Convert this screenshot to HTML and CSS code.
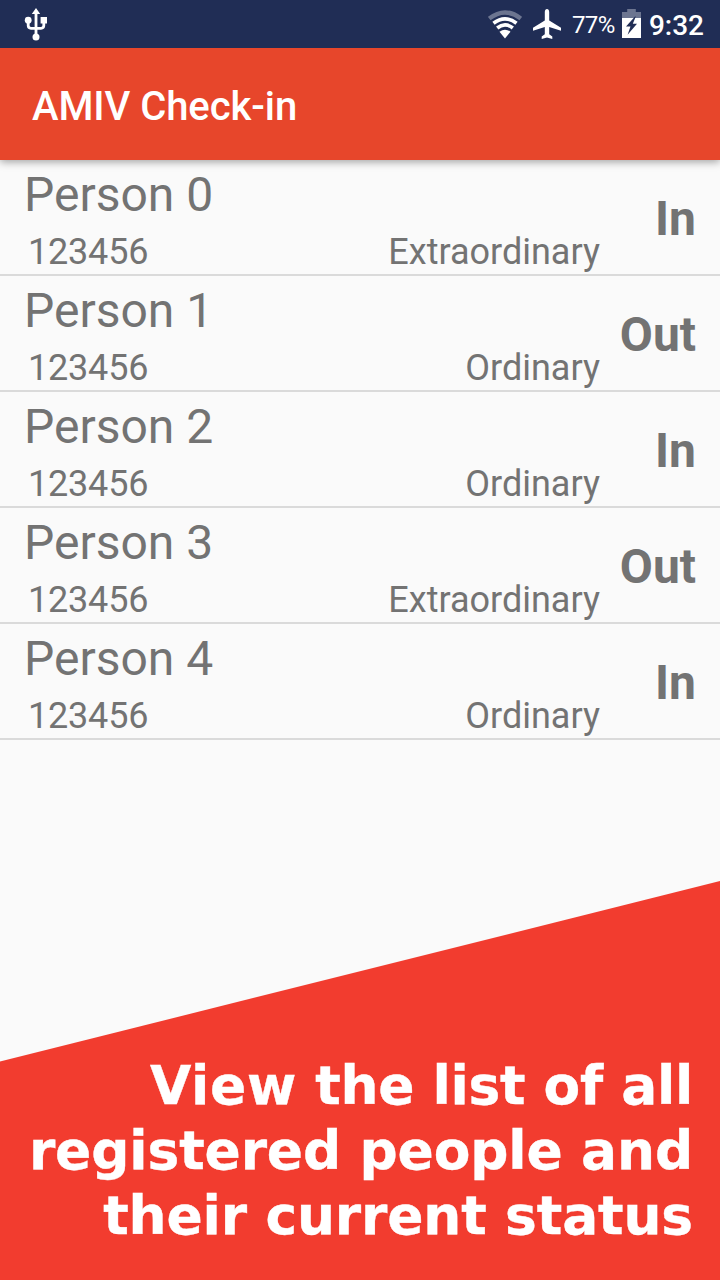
FILE: index.html
```html
<!DOCTYPE html>
<html lang="en">
<head>
<meta charset="utf-8">
<title>AMIV Check-in</title>
<link rel="stylesheet" href="styles.css">
</head>
<body>
<div class="screen">
  <header class="status-bar">
    <svg class="icon-usb" width="24" height="34" viewBox="0 0 24 34">
      <g fill="none" stroke="#fff" stroke-width="2.8"><path d="M12 5V29"/><path d="M4.2 13V17.6Q4.2 20.3 7 20.3H17Q19.8 20.3 19.8 17.6V12"/></g>
      <path fill="#fff" d="M12 0L16.2 6H7.8ZM16.6 9H23V15.4H16.6Z"/>
      <circle cx="4.2" cy="12.2" r="3.4" fill="#fff"/><circle cx="12" cy="29" r="3.5" fill="#fff"/>
    </svg>
    <div class="status-icons">
      <svg class="icon-wifi" width="34" height="29" viewBox="0 0 34 29">
        <g fill="none" stroke="#fff" stroke-width="3.7">
          <path stroke="#6c7590" stroke-width="4.4" d="M1.2 8.6Q17-3.8 32.8 8.6"/>
          <path d="M5.5 13.2Q17 4.4 28.5 13.2"/>
          <path d="M9.2 18Q17 11.8 24.8 18"/>
        </g>
        <path fill="#fff" d="M11.5 21.7Q17 17.8 22.5 21.7L17 28.5Z"/>
      </svg>
      <svg class="icon-plane" width="28" height="30" viewBox="0 0 28 30">
        <path fill="#fff" d="M28 21.7V18.8L16.2 11.4V2.9C16.2 1.2 15.2 0 14 0S11.8 1.2 11.8 2.9V11.4L0 18.8V21.7L11.8 18V25.3L8.7 27.6V30L14 28.5L19.3 30V27.6L16.2 25.3V18Z"/>
      </svg>
      <span class="battery-level">77%</span>
      <svg class="icon-battery" width="19" height="29" viewBox="0 0 19 29">
        <path fill="#6c7590" d="M5.2 0H13.8V3H19V9H0V3H5.2Z"/>
        <path fill="#fff" d="M0 9H19V29H0Z"/>
        <path fill="#202d55" d="M13 7.5L4 17.5H8.5L5.6 25.8L15 14.8H10.8L13.8 7.5Z"/>
      </svg>
      <span class="clock">9:32</span>
    </div>
  </header>
  <div class="app-bar"><h1 class="title">AMIV Check-in</h1></div>
  <main class="list">
    <div class="row"><div class="details"><div class="name">Person 0</div><div class="meta"><span class="number">123456</span><span>Extraordinary</span></div></div><div class="state">In</div></div>
    <div class="row"><div class="details"><div class="name">Person 1</div><div class="meta"><span class="number">123456</span><span>Ordinary</span></div></div><div class="state">Out</div></div>
    <div class="row"><div class="details"><div class="name">Person 2</div><div class="meta"><span class="number">123456</span><span>Ordinary</span></div></div><div class="state">In</div></div>
    <div class="row"><div class="details"><div class="name">Person 3</div><div class="meta"><span class="number">123456</span><span>Extraordinary</span></div></div><div class="state">Out</div></div>
    <div class="row"><div class="details"><div class="name">Person 4</div><div class="meta"><span class="number">123456</span><span>Ordinary</span></div></div><div class="state">In</div></div>
  </main>
  <section class="banner">
    <p class="caption"><span class="line line-tight"><span class="lead">View</span> the list of all</span><span class="line">registered people and</span><span class="line">their current status</span></p>
  </section>
</div>
</body>
</html>
```
FILE: styles.css
```css
* { box-sizing: border-box; }
body { margin: 0; }
.screen {
  width: 720px;
  height: 1280px;
  overflow: hidden;
  display: flex;
  flex-direction: column;
  background: #fafafa;
  font-family: Roboto, sans-serif;
  color: #737373;
}
.status-bar {
  position: relative;
  z-index: 1;
  height: 48px;
  flex: none;
  display: flex;
  justify-content: space-between;
  padding: 0 16px 0 24px;
  background: #202d55;
  color: #fff;
}
.icon-usb { margin-top: 8px; }
.status-icons { display: flex; align-items: flex-start; }
.icon-wifi { margin: 10px 11px 0 0; }
.icon-plane { margin: 9px 11px 0 0; }
.battery-level { width: 43px; font-size: 24px; line-height: 50px; margin-right: 7px; letter-spacing: -0.5px; white-space: nowrap; }
.icon-battery { margin: 9px 8px 0 0; }
.clock { font-size: 28px; line-height: 51px; font-weight: 500; }
.app-bar {
  height: 112px;
  flex: none;
  display: flex;
  align-items: center;
  padding: 6px 32px 0;
  background: #e7462b;
  box-shadow: 0 2px 8px rgba(0, 0, 0, 0.36);
}
.title { margin: 0; font-size: 40px; line-height: 48px; font-weight: 500; letter-spacing: -0.08px; color: #fff; }
.list { flex: 1; }
.row {
  height: 116px;
  display: flex;
  justify-content: space-between;
  align-items: center;
  padding-right: 24px;
  border-bottom: 2px solid #dadada;
}
.details { width: 600px; height: 114px; padding: 7px 0 0 24px; }
.name { font-size: 48px; line-height: 56px; }
.meta {
  display: flex;
  justify-content: space-between;
  padding-left: 4px;
  margin-top: 8px;
  font-size: 36px;
  line-height: 42px;
}
.number { letter-spacing: -0.2px; }
.state { font-size: 48px; line-height: 56px; font-weight: 700; padding-top: 3px; }
.banner {
  height: 399px;
  flex: none;
  padding: 172px 27px 0 0;
  background: #f23c2f;
  clip-path: polygon(0 180.5px, 100% 0, 100% 100%, 0 100%);
}
.caption {
  margin: 0;
  font: 700 53.4px/65px Verdana, "DejaVu Sans", sans-serif;
  letter-spacing: -0.12px;
  color: #fff;
  -webkit-text-stroke: 0.4px #fff;
  text-align: right;
  white-space: nowrap;
}
.line { display: block; }
.line-tight { letter-spacing: -0.28px; }
.lead { letter-spacing: 0.7px; }
```
